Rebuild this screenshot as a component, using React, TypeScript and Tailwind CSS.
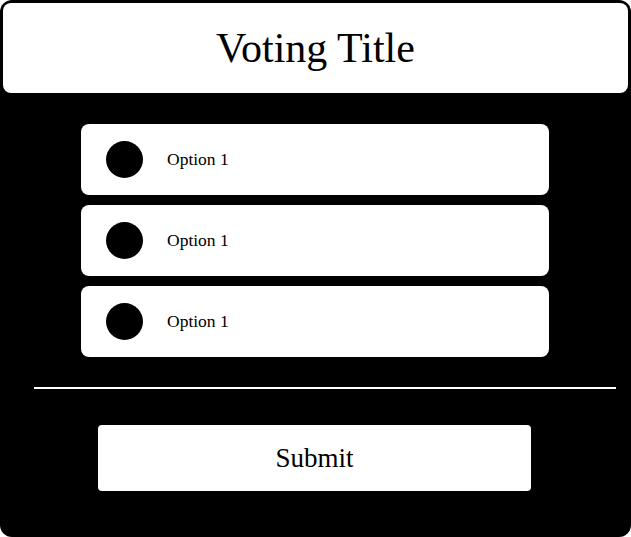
import React from "react";

const options = ["Option 1", "Option 1", "Option 1"];

export default function App() {
  const [selected, setSelected] = React.useState<number | null>(null);

  return (
    <div className="h-[537px] w-[631px] bg-white font-['Liberation_Serif',serif] text-black">
      <div className="flex h-full w-full flex-col rounded-[12px] bg-black p-[3px]">
        <div className="flex h-[90px] items-center justify-center rounded-[8px] bg-white">
          <h1 className="text-[42px] leading-none">Voting Title</h1>
        </div>

        <div className="ml-[78px] mt-[31px] flex w-[468px] flex-col gap-[10px]">
          {options.map((option, i) => (
            <button
              key={i}
              onClick={() => setSelected(i)}
              className="flex h-[71px] items-center gap-[24px] rounded-[8px] bg-white px-[25px] text-left"
            >
              <span className="h-[37px] w-[37px] rounded-full bg-black" />
              <span className="text-[17.5px]">{option}</span>
            </button>
          ))}
        </div>

        <div className="ml-[31px] mt-[30px] h-[2px] w-[582px] bg-white" />

        <button className="ml-[95px] mt-[36px] flex h-[66px] w-[433px] items-center justify-center rounded-[4px] bg-white text-[27px]">
          Submit
        </button>
      </div>
    </div>
  );
}
